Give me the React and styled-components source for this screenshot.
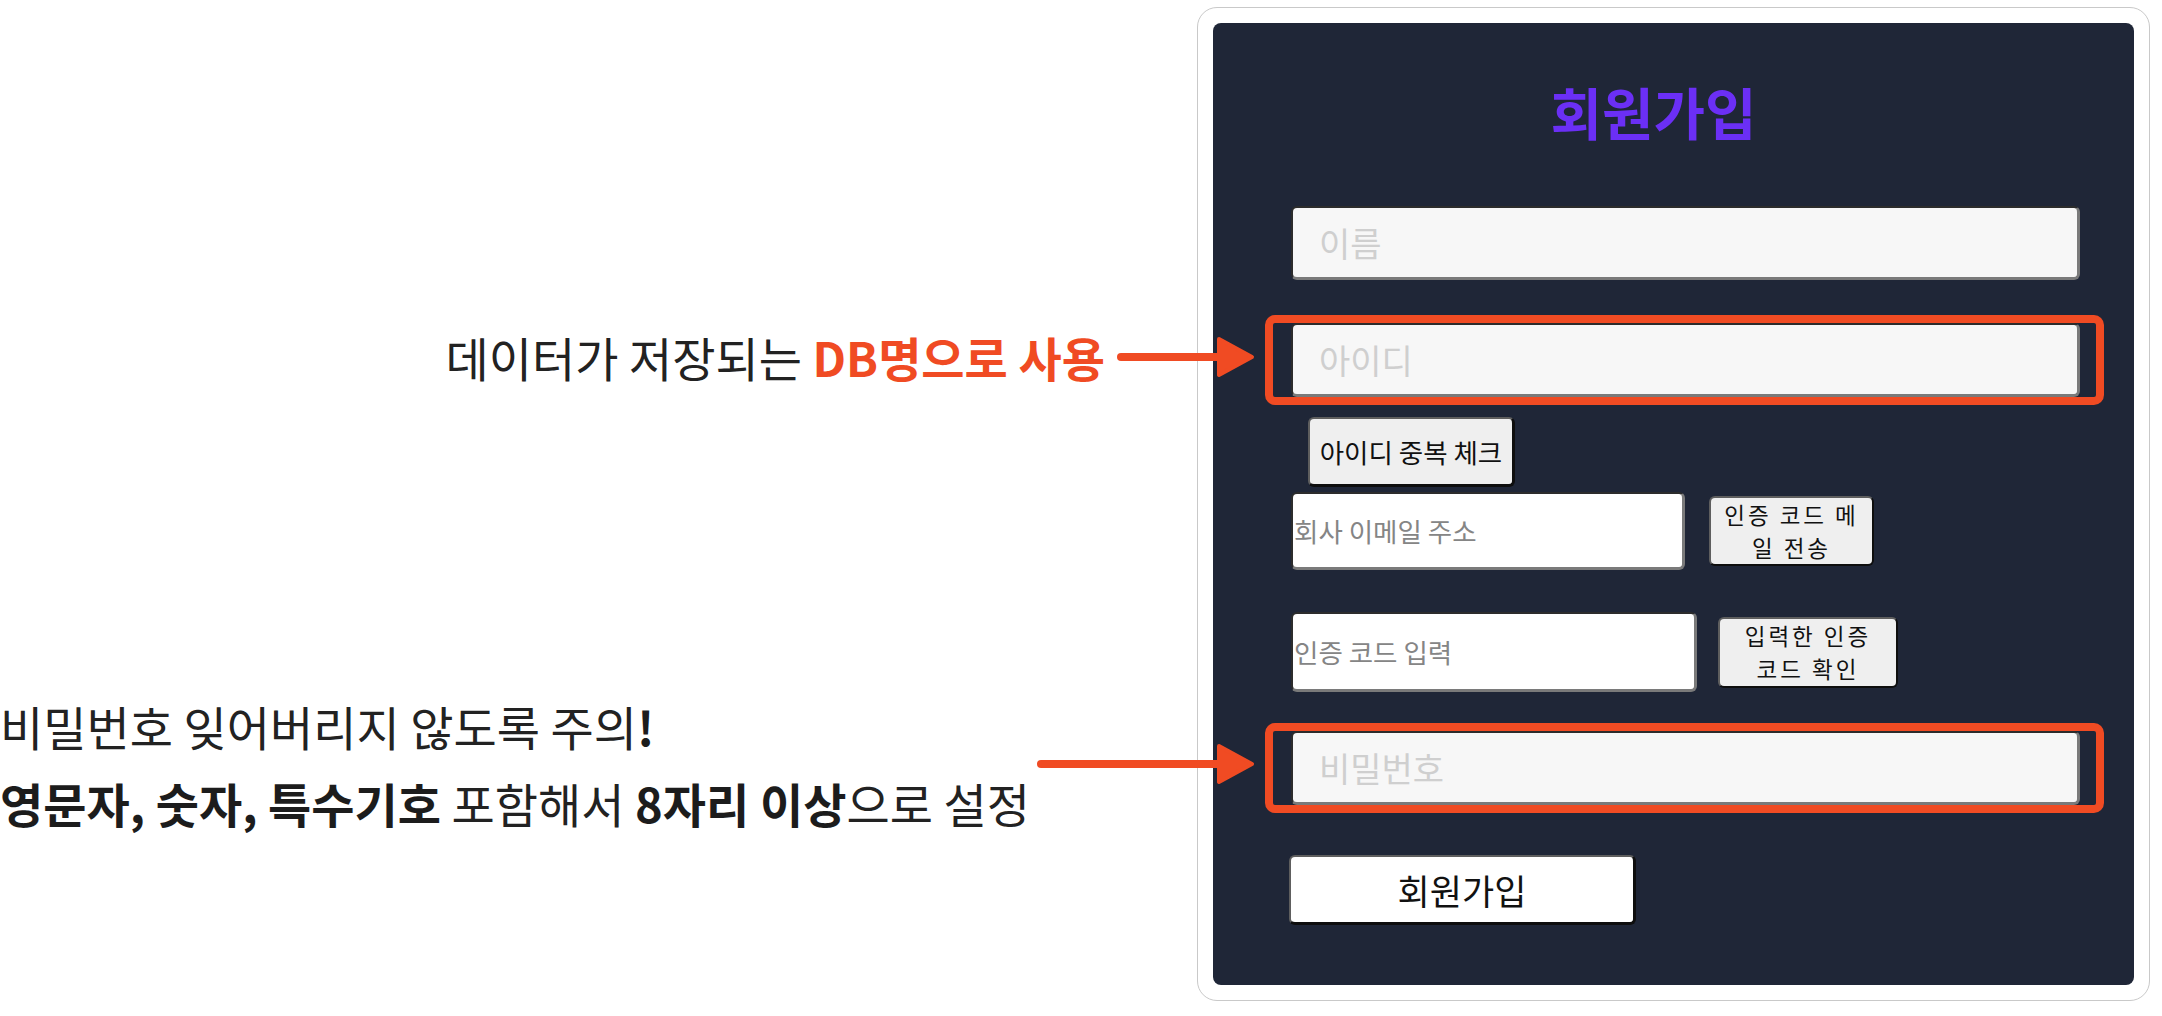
import styled, { createGlobalStyle } from 'styled-components'

const GlobalStyle = createGlobalStyle`
  html, body {
    margin: 0;
    padding: 0;
    background: #ffffff;
  }
  body {
    font-family: "Noto Sans CJK KR", "Noto Sans", sans-serif;
  }
`

const ORANGE = '#f04b23'

const Page = styled.div`
  display: flex;
  width: 2162px;
  height: 1016px;
  overflow: hidden;
`

const Notes = styled.div`
  width: 1197px;
  flex-shrink: 0;
  display: flex;
  flex-direction: column;
  padding-top: 329px;
  box-sizing: border-box;
`

const NoteRow = styled.div`
  display: flex;
  align-items: center;
  justify-content: ${p => (p.$right ? 'flex-end' : 'space-between')};
  margin-top: ${p => p.$top || 0}px;
`

const NoteText = styled.div`
  font-size: 47px;
  line-height: ${p => p.$lh || 56}px;
  color: #222222;
  white-space: nowrap;
`

const Strong = styled.b`
  font-weight: 700;
  color: ${p => (p.$accent ? ORANGE : '#1c1c1c')};
`

const ArrowSvg = styled.svg`
  flex-shrink: 0;
  position: relative;
  z-index: 2;
  margin-left: ${p => p.$gap || 0}px;
  margin-right: -58px;
`

const Card = styled.div`
  margin-top: 7px;
  width: 953px;
  height: 994px;
  box-sizing: border-box;
  border: 1.5px solid #c9c9c9;
  border-radius: 20px;
  padding: 15px;
  background: #ffffff;
`

const Panel = styled.div`
  height: 100%;
  background: #1f2637;
  border-radius: 8px;
  padding-left: 78px;
  box-sizing: border-box;
  display: flex;
  flex-direction: column;
  align-items: flex-start;
`

const Title = styled.h1`
  margin: 58px 0 0;
  width: 789px;
  padding-right: 64px;
  box-sizing: border-box;
  text-align: center;
  font-size: 56px;
  line-height: 60px;
  font-weight: 700;
  color: #6b2ff5;
`

const Input = styled.input`
  display: block;
  box-sizing: border-box;
  width: ${p => p.$w || 789}px;
  height: ${p => p.$h || 74}px;
  margin: 0;
  padding: 0 0 0 ${p => (p.$plain ? 1 : 26)}px;
  border: 2px solid;
  border-color: #2c2c2c #7a7a7a #7a7a7a #2c2c2c;
  border-bottom-width: 3px;
  border-right-width: 3px;
  border-radius: 6px;
  background: ${p => (p.$plain ? '#ffffff' : '#f7f7f7')};
  font-family: "Noto Sans CJK KR", "Noto Sans", sans-serif;
  font-size: ${p => (p.$plain ? 26.5 : 34)}px;
  color: #222;
  outline: none;

  &::placeholder {
    color: ${p => (p.$plain ? '#858585' : '#cfcfcf')};
  }
`

const Highlight = styled.div`
  margin: ${p => p.$top}px -24px 0 -26px;
  padding: 0 16px 0 18px;
  border: 8px solid ${ORANGE};
  border-radius: 10px;
`

const Button = styled.button`
  box-sizing: border-box;
  width: ${p => p.$w}px;
  height: ${p => p.$h || 70}px;
  margin: 0;
  padding: 0;
  border: 2px solid;
  border-color: #5e5e5e #0e0e0e #0e0e0e #5e5e5e;
  border-right-width: 3px;
  border-bottom-width: 3px;
  border-radius: 6px;
  background: ${p => (p.$white ? '#ffffff' : '#efefef')};
  font-family: "Noto Sans CJK KR", "Noto Sans", sans-serif;
  font-size: ${p => p.$fs || 26.5}px;
  line-height: 38px;
  color: #111;
  white-space: nowrap;
  text-align: center;
`

const StackButton = styled(Button)`
  border-width: 2px;
  font-size: 22.5px;
  letter-spacing: 3px;
  line-height: 33px;
`

const Row = styled.div`
  display: flex;
  align-items: center;
  gap: ${p => p.$gap}px;
  margin-top: ${p => p.$top}px;
`

const Spaced = styled.div`
  margin-top: ${p => p.$top}px;
  margin-left: ${p => p.$left || 0}px;
`

function Arrow({ width, gap }) {
  const tip = width - 1
  return (
    <ArrowSvg width={width} height={42} viewBox={`0 0 ${width} 42`} $gap={gap}>
      <line x1="4" y1="21" x2={width - 30} y2="21" stroke={ORANGE} strokeWidth="8" strokeLinecap="round" />
      <polygon
        points={`${tip - 35},3 ${tip - 2},21 ${tip - 35},39`}
        fill={ORANGE}
        stroke={ORANGE}
        strokeWidth="4"
        strokeLinejoin="round"
      />
    </ArrowSvg>
  )
}

export default function App() {
  return (
    <>
      <GlobalStyle />
      <Page>
        <Notes>
          <NoteRow $right>
            <NoteText>
              데이터가 저장되는 <Strong $accent>DB명으로 사용</Strong>
            </NoteText>
            <Arrow width={138} gap={12} />
          </NoteRow>
          <NoteRow $top={302}>
            <NoteText $lh={77}>
              비밀번호 잊어버리지 않도록 주의<Strong>!</Strong>
              <br />
              <Strong>영문자, 숫자, 특수기호</Strong> 포함해서 <Strong>8자리 이상</Strong>으로 설정
            </NoteText>
            <Arrow width={218} />
          </NoteRow>
        </Notes>

        <Card>
          <Panel>
            <Title>회원가입</Title>

            <Spaced $top={65}>
              <Input placeholder="이름" />
            </Spaced>

            <Highlight $top={35}>
              <Input placeholder="아이디" />
            </Highlight>

            <Spaced $top={12} $left={17}>
              <Button $w={207}>아이디 중복 체크</Button>
            </Spaced>

            <Row $top={5} $gap={24}>
              <Input $plain $w={394} $h={78} placeholder="회사 이메일 주소" />
              <StackButton $w={165}>
                인증 코드 메<br />일 전송
              </StackButton>
            </Row>

            <Row $top={42} $gap={21}>
              <Input $plain $w={406} $h={80} placeholder="인증 코드 입력" />
              <StackButton $w={180} $h={71}>
                입력한 인증<br />코드 확인
              </StackButton>
            </Row>

            <Highlight $top={31}>
              <Input type="password" placeholder="비밀번호" />
            </Highlight>

            <Spaced $top={42} $left={-2}>
              <Button $white $w={347} $fs={35}>회원가입</Button>
            </Spaced>
          </Panel>
        </Card>
      </Page>
    </>
  )
}
